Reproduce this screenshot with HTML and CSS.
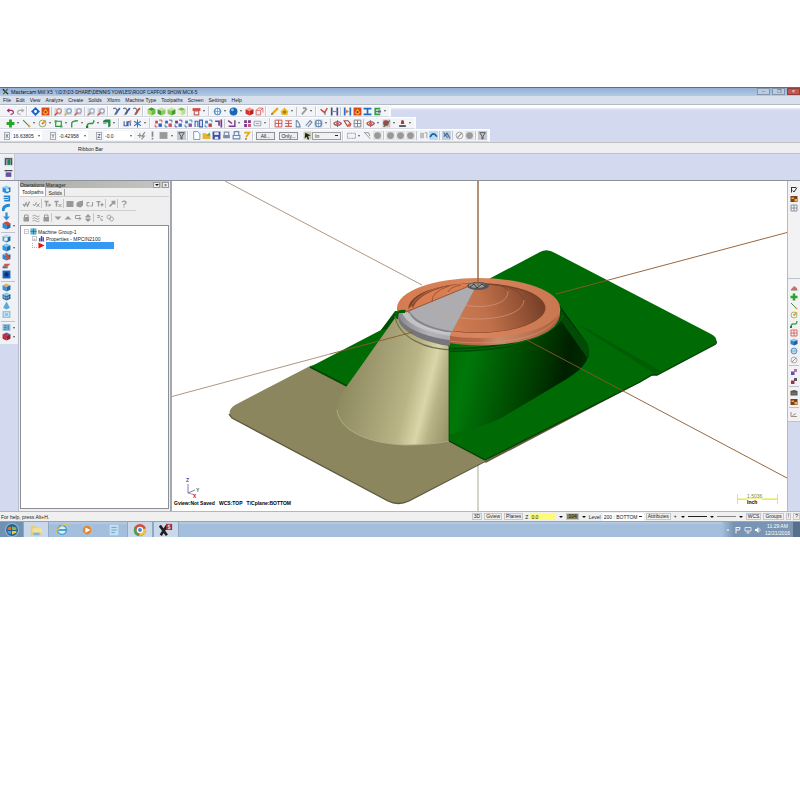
FILE: index.html
```html
<!DOCTYPE html>
<html lang="en">
<head>
<meta charset="utf-8">
<title>Mastercam Mill X5</title>
<link rel="stylesheet" href="styles.css">
</head>
<body>
<div class="app">
  <header class="titlebar">
    <span data-icon="mcx"></span>
    <span class="title">Mastercam Mill X5&nbsp; \\D3\D3-SHARE\DENNIS YOWLES\ROOF CAPFOR SHOW.MCX-5</span>
    <button class="win" aria-label="Minimize">–</button><button class="win" aria-label="Restore">❐</button><button class="win close" aria-label="Close">×</button>
  </header>
  <nav class="menubar">
    <button>File</button><button>Edit</button><button>View</button><button>Analyze</button><button>Create</button><button>Solids</button><button>Xform</button><button>Machine Type</button><button>Toolpaths</button><button>Screen</button><button>Settings</button><button>Help</button>
  </nav>
  <div class="toolbars">
    <div class="bar" data-bar="undo redo / diamond gear | magR magB magR2 | magG magR2 / penB penN penR / cubeT cubeG cubeY cubeL / calR v / globe v ball v cubeR cubeO / pencil house v | pencilG v / angle hN | hO gear iBeam eG v"></div>
    <div class="bar" data-bar="plus v line v arc v rect v fillet v spline v solid v / dim star v / xfA xfB xfC xfD xfE xfF xfG | move v gridP rectS v / gridR rowsR half clip globeB v | eyeR tagR gridK | eyeR v disc v lamp v"></div>
    <div class="bar">
      <label class="axis" for="ax">X</label><input class="num" id="ax" value="16.63805"><span class="caret"></span>
      <label class="axis" for="ay">Y</label><input class="num" id="ay" value="-0.42958"><span class="caret"></span>
      <label class="axis" for="az">Z</label><input class="num" id="az" value="-0.0"><span class="caret"></span>
      <div class="icons loose" data-bar="bolt bang block v funnel"></div>
      <div class="icons" data-bar="/ doc open save print1 print2 help /"></div>
      <button class="push">All...</button><button class="push">Only...</button>
      <div class="icons" data-bar="pick"></div>
      <select class="mode" aria-label="Selection mode"><option>In</option></select>
      <div class="icons" data-bar="/ dash v wand dot | dot dot dot | shade curve | net | no dot | funnel"></div>
    </div>
  </div>
  <div class="ribbon">Ribbon Bar</div>
  <div class="dock"><div class="docked" data-bar="green1 purple1"></div></div>
  <main class="work">
    <aside class="side" data-bar="sExt sRev sSweep sLoft sFil v - sShell sCyl v sTrim sSheet sBlock - sBox sMesh sCone sPan - sList v sBall v"></aside>
    <section class="panel">
      <div class="panelhead"><span>Operations Manager</span><button class="mini" aria-label="Panel menu"><span class="caret dark"></span></button><button class="mini" aria-label="Close panel">×</button></div>
      <div class="tabs"><button class="tab on">Toolpaths</button><button class="tab">Solids</button></div>
      <div class="ptools" data-bar="chk chkx | tT tTx | block hex g1 tG | wrench | q"></div>
      <div class="ptools second" data-bar="lock wave lock | dn up stepr ud | net2 rings"></div>
      <div class="tree">
        <div class="node"><span class="exp">−</span><span data-icon="group"></span>Machine Group-1</div>
        <div class="node lvl"><span class="exp">+</span><span data-icon="props"></span>Properties - MPCIN2100</div>
        <div class="node lvl"><span class="elbow"></span><span data-icon="arrow"></span><span class="sel"></span></div>
      </div>
    </section>
    <section class="view">
      <svg viewBox="172 181 615 330" preserveAspectRatio="xMidYMid slice" role="img" aria-label="Roof cap model">
        <defs>
          <linearGradient id="tan" gradientUnits="userSpaceOnUse" x1="345" y1="375" x2="455" y2="403">
            <stop offset="0" stop-color="#8e8a60"/><stop offset=".3" stop-color="#a39e73"/><stop offset=".58" stop-color="#bab587"/><stop offset=".74" stop-color="#dbd6aa"/><stop offset=".84" stop-color="#b8b386"/><stop offset="1" stop-color="#99946a"/>
          </linearGradient>
          <linearGradient id="grn" gradientUnits="userSpaceOnUse" x1="449" y1="360" x2="590" y2="392">
            <stop offset="0" stop-color="#006c02"/><stop offset=".13" stop-color="#00780a"/><stop offset=".35" stop-color="#005c04"/><stop offset=".62" stop-color="#003a00"/><stop offset=".8" stop-color="#002000"/><stop offset="1" stop-color="#003300"/>
          </linearGradient>
          <linearGradient id="cop" gradientUnits="userSpaceOnUse" x1="455" y1="325" x2="545" y2="295">
            <stop offset="0" stop-color="#cf7b53"/><stop offset=".35" stop-color="#c0704a"/><stop offset=".7" stop-color="#975435"/><stop offset="1" stop-color="#6e3b27"/>
          </linearGradient>
          <linearGradient id="rim" x1="0" x2="1"><stop offset="0" stop-color="#d57b50"/><stop offset=".5" stop-color="#d9855d"/><stop offset="1" stop-color="#c87750"/></linearGradient>
          <linearGradient id="edge" x1="0" x2="1"><stop offset="0" stop-color="#9a5535"/><stop offset=".5" stop-color="#b9694a"/><stop offset=".62" stop-color="#c98c6c"/><stop offset="1" stop-color="#ab5e3d"/></linearGradient>
          <linearGradient id="sil" x1="0" x2="1"><stop offset="0" stop-color="#8c8c90"/><stop offset=".2" stop-color="#b4b4b8"/><stop offset=".42" stop-color="#a2a2a6"/></linearGradient>
          <clipPath id="left"><path d="M475 288 450 335V352H380V312H407L466 287z"/></clipPath>
        </defs>
        <g fill="none" stroke="#8d6a4c" stroke-width=".7">
          <path d="M225 181 422 285M172 396.500 330 354"/><path d="M478 450V511" stroke="#8b8468"/>
        </g>
        <path d="M232 418Q226 411 235 405L310 366 400 340 485 461 409 501Q398 506 388 501z" fill="#8b865e"/>
        <path d="M229 414 232 418 388 501Q398 506 409 501L486 461" fill="none" stroke="#5b583c" stroke-width="1.300"/>
        <path d="M640 381 485 462" stroke="#655e42" stroke-width="2.500"/>
        <path d="M449 300 540 252Q547 248 555 253L711 334Q720 339 714 345L657 375 652 375 640 382 485 460 449 441z" fill="#006b04"/>
        <path d="M716 341Q717 344 714 345L657 375 652 375 640 382 485 460 449 441" fill="none" stroke="#003f02" stroke-width="1.300"/>
        <path d="M578 325 586 328 661 371 655 374z" fill="#005d04"/>
        <path d="M310 367 381 330 395 311H407L397 320 347 386z" fill="#006b04"/>
        <path d="M310 367 347 386" stroke="#004502" stroke-width="1.500"/>
        <path d="M395 313 381 330 399 327z" fill="#004c04"/>
        <path d="M395 318 347 386Q334 403 337 413C340 432 372 444 405 445Q430 445 449 441V340z" fill="url(#tan)"/>
        <path d="M337 410C340 432 372 444 405 445Q430 445 449 441" fill="none" stroke="#b4af86" stroke-width=".8"/>
        <path d="M449 340 560 306 587 343Q592 355 583 366 576 374 560 383L503 417Q485 427 449 434z" fill="url(#grn)"/>
        <path d="M558 306 587 343Q591 353 588 359L559 318z" fill="#004b05"/>
        <path d="M395 316C398 337 425 350 455 350 515 350 557 335 562 312" fill="none" stroke="#72704b" stroke-width="1.200"/>
        <path d="M449 350C515 350 557 335 562 312" fill="none" stroke="#004b06" stroke-width="4"/>
        <path d="M449 350C515 350 557 335 563 315" fill="none" stroke="#08740e" stroke-width=".8"/>
        <path d="M397 308V313C402 356 558 356 560 314V308z" fill="url(#edge)"/>
        <ellipse cx="478.500" cy="308" rx="81.500" ry="30" fill="url(#rim)"/>
        <path d="M560 308C558 350 440 350 410 329" fill="none" stroke="#df936e" stroke-width=".6"/>
        <ellipse cx="477" cy="308" rx="68.500" ry="25" fill="#7c4228"/>
        <ellipse cx="477.500" cy="308.500" rx="66.500" ry="24" fill="url(#cop)"/>
        <path d="M411 306C420 288 453 282 472 284L407 311z" fill="#da7d50"/>
        <path d="M411 306C421 290 447 284 461 284 438 287 419 294 413 308z" fill="#8e4c30"/>
        <g clip-path="url(#left)">
          <ellipse cx="478" cy="317" rx="80" ry="31" fill="#77777b"/>
          <ellipse cx="478" cy="312" rx="80" ry="30" fill="url(#sil)"/>
          <ellipse cx="478" cy="310" rx="76" ry="28" fill="#c0c0c5"/>
          <ellipse cx="478" cy="308" rx="71" ry="27" fill="#85858a"/>
          <ellipse cx="478" cy="307" rx="69" ry="26" fill="#acacb1"/>
          <path d="M409 313C414 325 430 332 451 333" fill="none" stroke="#d0d0d4" stroke-width=".8"/>
        </g>
        <g fill="none" stroke-width=".6">
          <path d="M432 302C432 324 523 326 524 300" stroke="#d1a18b"/><path d="M448 292C447 310 509 313 508 291" stroke="#cfa38f"/>
          <path d="M524 300Q521 290 502 286M508 291Q505 286 495 284M448 292Q450 287 461 285M432 302Q431 292 449 286" stroke="#71402c"/>
        </g>
        <path d="M406 312 467 287" stroke="#97573b"/>
        <path d="M397 312Q399 309 406 310L405 313 399 313 397 320z" fill="#005f03"/>
        <ellipse cx="478" cy="286" rx="11" ry="4" fill="#555557"/>
        <ellipse cx="477" cy="285.500" rx="8" ry="2.300" fill="#999b9d"/><path d="M470 287 474 284 477 288 482 284 486 287" fill="none" stroke="#38393c"/>
        <path d="M449 345V441" stroke="#004b02" stroke-width=".8"/>
        <g fill="none" stroke="#8b572c" stroke-width=".9">
          <path d="M478 181V286" stroke="#95643c" stroke-width="1.400"/><path d="M787 232.500 556 294M527 340 787 478M413 332 330 354"/>
        </g>
        <path d="M188 484V493L195 490" fill="none" stroke="#5560a8" stroke-width=".8"/><path d="M188 493 195 495" stroke="#b44" stroke-width=".6"/>
        <g class="gl"><text x="186" y="482" fill="#3344bb">Z</text><text x="196" y="492" fill="#178242">Y</text><text x="193" y="498" fill="#c22">X</text>
        <text x="174" y="505" xml:space="preserve">Gview:Not Saved   WCS:TOP   T/Cplane:BOTTOM</text></g>
        <path d="M737.500 494V504M777.500 494V504M738 499.500H747M762 499.500H777" fill="none" stroke="#e4ee42"/>
        <path d="M738 498.500H777" stroke="#eff47c" stroke-width=".8"/>
        <text class="scale" x="747" y="498">1.5036</text><text class="gl" x="747" y="504">Inch</text>
      </svg>
    </section>
    <aside class="side right">
      <div class="strip first" data-bar="pickK winO gridK"></div>
      <div class="strip" data-bar="house2 plus line arc spline gridR ballB globe no - cubeP cubeD - rain winO - inch"></div>
    </aside>
  </main>
  <footer class="status">
    <span class="help">For help, press Alt+H.</span>
    <button>3D</button><button>Gview</button><button>Planes</button>
    <label for="depth">Z</label><input class="depth" id="depth" value="0.0"><span class="caret dark"></span>
    <button class="swatch">104</button><span class="caret dark"></span>
    <label for="level">Level</label><select class="level" id="level"><option>200 : BOTTOM</option></select>
    <button>Attributes</button><button class="flat">+</button><span class="caret dark"></span>
    <span class="rule thick"></span><span class="caret dark"></span><span class="rule"></span><span class="caret dark"></span>
    <button>WCS</button><button>Groups</button><button>!</button><button>?</button>
  </footer>
  <div class="taskbar">
    <button class="task" aria-label="Start" data-icon="orb"></button>
    <button class="task open" aria-label="Explorer" data-icon="folder"></button>
    <button class="task" aria-label="Internet Explorer" data-icon="ie"></button>
    <button class="task" aria-label="Media Player" data-icon="media"></button>
    <button class="task" aria-label="Notes" data-icon="note"></button>
    <button class="task open" aria-label="Chrome" data-icon="chrome"></button>
    <button class="task open" aria-label="Mastercam" data-icon="mcBig"></button>
    <div class="tray"><span data-icon="tup"></span><span data-icon="flag"></span><span data-icon="screen"></span><span data-icon="vol"></span>
      <div class="clock">11:29 AM<br>12/21/2016</div><span class="peek"></span></div>
  </div>
</div>
<script src="script.js"></script>
</body>
</html>
```
FILE: styles.css
```css
* { box-sizing: border-box; }
body { margin: 0; background: #fff; font: 5px/6px "Liberation Sans", Arial, sans-serif; color: #222; }
button, input, select { font: inherit; color: inherit; margin: 0; padding: 0; border: 0; background: none; border-radius: 0; }
select { appearance: none; }
svg { display: block; }
.app { margin-top: 87px; display: flex; flex-direction: column; background: #d3d9ee; }

.titlebar { height: 9px; display: flex; align-items: center; gap: 1px; padding: 0 0 1px 2px; border-top: 1px solid #56718f; background: linear-gradient(#94b0d4, #b4cae6); }
.titlebar svg { width: 7px; height: 7px; }
.title { flex: 1; padding-left: 1px; color: #16202f; white-space: nowrap; font-family: Roboto, "Liberation Sans", sans-serif; }
.win { width: 13px; height: 7px; line-height: 5px; border: 1px solid #8395ad; background: #bccbe0; margin-right: 1px; color: #43566f; }
.win.close { background: #c4554d; border-color: #8f403c; color: #fff; margin-right: 0; }
.menubar { height: 9px; background: #d8e0ee; border-bottom: 1px solid #b5bac5; white-space: nowrap; display: grid; grid-template-columns: repeat(12, auto) 1fr; column-gap: 5px; align-items: center; padding-left: 3px; }

.toolbars { background: linear-gradient(#fff 0 2px, #d3d9ee 5px); display: flex; flex-direction: column; align-items: flex-start; }
.bar { height: 12px; display: flex; align-items: center; background: #f3f4f7; border-top: 1px solid #fff; border-bottom: 1px solid #d5d8df; border-right: 2px solid #fafbfc; padding: 0 1px 0 5px; }
.bar:last-child { height: 13px; padding-left: 4px; }
.icons { display: flex; align-items: center; }
.loose { gap: 1px; }
.ico { width: 10px; height: 9px; display: flex; align-items: center; justify-content: center; flex: none; }
.ico svg { width: 9px; height: 9px; }
.caret { width: 6px; height: 6px; flex: none; display: flex; align-items: center; justify-content: center; }
.caret::after { content: ""; border: 1px solid transparent; border-top: 2px solid #555; border-bottom: 0; }
.caret.dark::after { border-width: 2px 2px 0; border-top-color: #111; }
.sep { width: 1px; height: 9px; margin: 0 1px; background: #c2c5cc; flex: none; }
.grip { width: 2px; height: 10px; margin: 0 2px 0 1px; border-left: 1px solid #c9ccd4; border-right: 1px solid #fff; flex: none; }
.axis { width: 6px; height: 8px; line-height: 6px; border: 1px solid #a9acb2; text-align: center; margin-right: 2px; }
.num { width: 24px; height: 9px; background: #fff; padding-left: 1px; }
.num + .caret { background: #fff; height: 9px; margin-right: 8px; }
#az + .caret { margin-right: 2px; }
.push { width: 19px; height: 8px; border: 1px solid #8d9097; background: #eeeef0; margin-right: 4px; line-height: 6px; }
.mode { width: 29px; height: 8px; border: 1px solid #9a9da3; padding-left: 2px; background: linear-gradient(#222, #222) calc(100% - 2px) 50% / 3px 1px no-repeat #f1f1f3; }

.ribbon { height: 12px; line-height: 12px; padding-left: 78px; background: #efeff2; border-top: 1px solid #bfc0c5; border-bottom: 1px solid #bfc2cb; }
.dock { height: 26px; display: flex; }
.docked { width: 15px; height: 26px; background: #eef0f6; border-right: 1px solid #c6cad6; display: flex; flex-direction: column; align-items: center; gap: 2px; padding: 2px 0 0 3px; }
.docked .ico { height: 10px; }

.work { display: flex; height: 331px; border-top: 1px solid #8f929a; }
.side { width: 19px; display: flex; flex-wrap: wrap; align-content: flex-start; padding: 4px 2px 0 1px; background: linear-gradient(#f0f1f5 0 163px, #d3d9ee 163px); border-right: 1px solid #b9bdc9; flex: none; }
.side .ico { height: 9px; margin-right: 5px; }
.side .ico.drop { margin-right: 0; }
.side .caret { width: 5px; height: 9px; }
.side .hr { width: 14px; height: 1px; margin: 2px 0 1px; background: #c0c3cb; }
.side.right { width: 13px; border: 0; border-left: 1px solid #b5b9c3; padding: 0; background: #d3d9ee; display: block; }
.right .ico { margin: 0 1px; }
.right .hr { display: block; width: 10px; margin: 1px; }
.strip { background: #f2f2f5; padding: 4px 0 3px; border-bottom: 1px solid #c0c3cb; }
.strip.first { height: 98px; }
.right .ico svg { width: 8px; height: 8px; }

.panel { width: 153px; flex: none; display: flex; flex-direction: column; background: #efefef; border-right: 2px solid #a4a7ad; padding: 0 1px 2px; }
.panelhead { height: 7px; display: flex; align-items: center; background: linear-gradient(90deg, #a9ada8, #c4c6c2); gap: 2px; }
.panelhead span:first-child { flex: 1; }
.panelhead .mini span:first-child { flex: none; }
.mini { width: 7px; height: 6px; line-height: 4px; border: 1px solid #999; background: #eee; display: flex; justify-content: center; align-items: center; }
.tabs { display: flex; align-items: flex-end; height: 9px; border-bottom: 1px solid #d0d0d0; }
.tab { height: 7px; line-height: 6px; padding: 0 2px; border: 1px solid #aaa; border-width: 0 1px 0 0; }
.tab.on { height: 9px; background: #fff; }
.ptools { width: 116px; height: 14px; display: flex; align-items: center; padding-left: 1px; border-bottom: 1px solid #d0d0d0; }
.ptools.second { height: 13px; border: 0; }
.ptools .sep { margin: 0 1px 0 0; }
.ptools svg { width: 8px; height: 8px; }
.tree { flex: 1; margin-top: 1px; border: 1px solid #8b8f96; background: #fff; padding: 2px 0 0 3px; }
.node { height: 7px; display: flex; align-items: center; gap: 1px; white-space: nowrap; }
.node svg { width: 7px; height: 7px; }
.lvl { padding-left: 8px; }
.exp { width: 5px; height: 5px; line-height: 3px; font-size: 4px; border: 1px solid #c5c8cd; color: #555; text-align: center; }
.elbow { width: 5px; height: 5px; border-left: 1px dotted #aaa; border-bottom: 1px dotted #aaa; }
.sel { width: 68px; height: 7px; background: #3399f5; }
.view { flex: 1; min-width: 0; background: #fff; }
.view svg { width: 100%; height: 100%; }
.gl { font: bold 5px "Liberation Sans", sans-serif; }
.scale { font: 5px "Liberation Sans", sans-serif; fill: #83853b; }

.status { height: 10px; display: flex; align-items: center; gap: 2px; background: #f0f0f0; border-top: 1px solid #b3b7c0; white-space: nowrap; }
.help { flex: 1; padding-left: 1px; }
.status button { height: 7px; padding: 0 1px; border: 1px solid #c6c8cc; line-height: 5px; }
.status button.flat { border: 0; }
.status .depth { width: 26px; height: 7px; background: #fdfb78; padding-left: 1px; }
.status .swatch { background: #8b865e; }
.status .level { width: 41px; height: 8px; padding-left: 1px; background: linear-gradient(#222, #222) calc(100% - 2px) 50% / 3px 1px no-repeat #fff; }
.rule { width: 19px; height: 1px; background: #888; }
.rule.thick { background: #222; }

.taskbar { height: 16px; display: flex; background: linear-gradient(#b7cde4, #a3bedc 3px, #a4bfdc); border-top: 1px solid #8ca5c4; }
.task { width: 26px; display: flex; align-items: center; justify-content: center; }
.task svg { width: 14px; height: 14px; }
.task.open { background: #c9d9ea; border: 1px solid #8fa7c2; border-width: 0 1px; }
.task:first-child { width: 23px; background: #6f91b4; }
.tray { margin-left: auto; width: 78px; display: flex; align-items: center; gap: 2px; padding-left: 2px; color: #fff; background: linear-gradient(90deg, #a3bedc, #7893b2 12px, #7d97b5); }
.tray svg { width: 8px; height: 8px; }
.clock { flex: 1; text-align: center; line-height: 7px; }
.peek { width: 7px; height: 100%; background: #566f8b; }
```
FILE: script.js
```js
// Icon artwork on a 16 x 16 grid.
const p = (d, c, w = 2) => `<path d="${d}" fill="none" stroke="${c}" stroke-width="${w}"/>`;
const f = (d, c) => `<path d="${d}" fill="${c}"/>`;
const o = (x, y, r, c, s = 'none') => `<circle cx="${x}" cy="${y}" r="${r}" fill="${c}" stroke="${s}" stroke-width="1.5"/>`;
const cube = (a, b, c) => f('M8 1 15 4 8 7 1 4z', a) + f('M1 4 8 7V15L1 12z', b) + f('M15 4 8 7V15L15 12z', c);
const mag = (c, h) => f('M1 2H14V14H1z', '#cfd6df') + o(9, 7, 4, '#e8f3fb', c) + p('M6 10 1 15', h, 2.5);
const pen = (c) => p('M2 3Q8 0 9 7T4 13', '#777', 2) + p('M14 2 6 12', c, 3);
const grid = (c) => p('M2 2H14V14H2zM2 8H14M8 2V14', c, 1.6);
const globe = (c) => o(8, 8, 6, '#eef7fd', c) + p('M2 8H14M8 2V14M5 3Q2 8 5 13M11 3Q14 8 11 13', c, 1);
const pair = (a, b) => f('M2 3H7V8H2z', a) + f('M8 8H14V14H8z', b) + p('M9 2H14V6M2 10V14H6', a, 1.6);
const G = '#999';
const ICONS = {
  mcx: p('M2 3 14 14', '#222', 3) + p('M13 2 3 14', '#3b6b3b', 3),
  undo: p('M4 6H10Q14 7 13 11 12 13 8 13', '#9b2a73') + f('M1 6 6 2V10z', '#9b2a73'),
  redo: p('M12 6H6Q2 7 3 11 4 13 8 13', '#aaa') + f('M15 6 10 2V10z', '#aaa'),
  diamond: f('M8 0 16 8 8 16 0 8z', '#1e62c4') + o(8, 8, 2.5, '#fff'),
  gear: f('M1 1H15V15H1z', '#d8481b') + f('M3 10 8 3 13 10 8 14z', '#f6b326') + o(8, 9, 2, '#9c2b10'),
  magR: mag('#c2503b', '#d33'), magB: mag('#4a7fb8', '#e2a33a'), magR2: mag('#8b6f9c', '#d54a36'), magG: mag('#8895a6', '#c96553'),
  penB: pen('#3467bd'), penN: pen('#3b5aa0'), penR: pen('#b6443a'),
  cubeT: cube('#3e9a2c', '#a9d873', '#6dbb3c'), cubeG: cube('#c5e59a', '#3f9e33', '#8cc765'), cubeY: cube('#c5e59a', '#8fc757', '#3f9e33'), cubeL: cube('#79bb4b', '#e2f3cf', '#b9dd95'),
  calR: f('M1 2H15V7H1z', '#d64a44') + p('M4 7H12V14H4z', '#c0605b'),
  globe: globe('#3c82bd'), globeB: f('M1 1H15V15H1z', '#b8cfe6') + globe('#54759d'),
  ball: o(8, 8, 7, '#1767b5') + o(6, 5, 2.5, '#8fc8ef'), ballB: cube('#8cc8ee', '#2c84cc', '#1a60ae'),
  cubeR: cube('#f09a8d', '#d9302b', '#b82320'), cubeO: p('M2 6H10V14H2zM6 2H14V10M2 6 6 2M10 6 14 2', '#dc6660', 1.6),
  pencil: p('M14 2 4 12', '#e2aa20', 4) + f('M2 14 3 10 6 13z', '#6b4a1c'), pencilG: p('M14 3 5 13M13 2H7', '#999', 3),
  house: f('M1 8 8 1 15 8 13 14H3z', '#e6bb2d') + o(8, 9, 3, '#a5752d'), house2: f('M1 12 8 4 14 8V12z', '#d56b74') + p('M2 12H15', '#6b8d65'),
  angle: p('M1 4 8 10 13 2', '#cc4037', 2.5) + p('M9 7V14', '#70809a'),
  hN: p('M3 1V15M13 1V15', '#3d5288', 3) + p('M3 8H13', '#ce6d7b'), hO: p('M3 1V15M13 1V15', '#2b70c7', 3) + f('M4 4 11 8 4 12z', '#e07b3a'),
  iBeam: p('M1 3H15M1 13H15M8 3V13', '#256cbd', 3), eG: p('M13 3H4V13H13M4 8H12', '#2aa339', 3) + f('M9 6H14V10H9z', '#6750a3'),
  plus: p('M8 1V15M1 8H15', '#26a528', 5), line: p('M2 2 14 14', '#468e48') + o(13, 13, 2, '#e3a73b'),
  arc: o(8, 8, 6, 'none', '#82a642') + p('M8 8 14 3', '#e19a2a', 3) + o(8, 8, 1.5, '#d9573a'), rect: p('M3 4H13V13H3z', '#2e9440') + f('M1 2H5V6H1zM11 11H15V15H11z', '#41a852'),
  fillet: p('M3 15V8Q3 3 14 3', '#38984b', 2.5), spline: p('M2 14Q2 7 8 8T14 2', '#2c9c34', 2.5) + f('M0 12H4V16H0z', '#227c2c'),
  solid: f('M2 3 6 1H15V13L11 15V6H2z', '#1f8446') + f('M2 6H8V9H2z', '#84ad91'),
  dim: p('M2 4V12H7V4M9 13V5Q14 3 13 12', '#4762a9') + o(13, 4, 2, '#df7f52'), star: p('M8 1V15M2 4 14 12M14 4 2 12', '#3872ba', 1.8),
  xfA: pair('#d44651', '#2c61ba'), xfB: pair('#3864b6', '#d14b59'), xfC: pair('#633a9d', '#3d70c0'), xfD: pair('#2f83c5', '#85538d'), xfE: p('M2 14V4H7V14M10 14V2H15V14z', '#3a60b2'), xfF: pair('#348ac7', '#c4384a'), xfG: p('M2 4H9V12M13 1V15', '#7d3a90', 3),
  move: p('M2 3 9 8M14 2V13H3', '#7d388c', 2.5), gridP: f('M2 2H7V7H2zM9 2H14V7H9zM2 9H7V14H2z', '#7d3b8a') + f('M9 9H14V14H9z', '#c24871'), rectS: p('M2 4H14V12H2zM5 8H11', '#8296b9', 1.5),
  gridR: grid('#cc5147'), rowsR: p('M2 3H14M2 8H14M2 13H14M8 3V13', '#ca6057', 2), half: p('M4 2V14H11Q10 6 4 2', '#6686ad', 1.8), clip: p('M3 12 11 3 14 6 7 14', '#7087a8', 2), gridK: grid('#77808c'),
  eyeR: p('M1 8Q8 1 15 8 8 15 1 8M8 2V14', '#a25759', 2) + o(8, 8, 2.5, '#cf594d'), tagR: p('M2 3 9 3 14 9 8 13z', '#a34b4b') + o(11, 11, 3, '#d86a4f'),
  disc: f('M1 1H15V15H1z', '#c6c2ca') + o(7, 7, 5, '#a94248') + p('M3 14 14 3', '#497143'), lamp: f('M6 2H10L11 9H5z', '#9e3932') + f('M2 11H14V14H2z', '#444'),
  bolt: p('M1 8H8M5 4V12M14 2 9 9H13L8 15', '#8b8b8b'), bang: p('M8 1V10M8 12V15', '#888', 3), block: f('M1 2H15V14H1z', G), funnel: f('M0 0H16V16H0z', '#c5c8ce') + p('M3 3H13L9 9V14H7V9z', '#4c5058', 1.6),
  doc: f('M3 1H10L14 5V15H3z', '#fff') + p('M3 1H10L14 5V15H3z', '#5d8ec1', 1.5), open: f('M1 4H7L9 6H15V14H1z', '#e5b432') + f('M8 8 14 2V8z', '#58a348'), save: f('M1 1H15V15H1z', '#3b4ea5') + f('M4 2H12V7H4zM5 10H11V14H5z', '#dfe6f7'),
  print1: f('M2 7H14V13H2z', '#7590ae') + p('M4 7V2H12V7', '#808ea2'), print2: p('M4 7V1H12V7M2 8H14V14H2z', '#6688b3'), help: p('M4 3H13L8 10V11', '#dda819', 3) + o(7, 14, 1.8, '#c98519'),
  pick: f('M1 1H15V15H1z', '#c7cbb0') + f('M4 3 14 8 9 9 11 15 8 15 7 10 3 13z', '#222'), pickK: p('M2 3H12M3 3V13M5 9 8 12 14 3', '#333'), dash: '<path d="M1 4H15V13H1z" fill="none" stroke="#888" stroke-width="1.5" stroke-dasharray="2 1"/>',
  wand: p('M2 2 13 14M3 3H10L12 9', '#8c9094', 1.6), dot: f('M0 0H16V16H0z', '#e2e2e4') + o(8, 8, 6, G), shade: f('M2 3H9V13H2z', '#b9bdc4') + p('M10 3H14V13', '#a4aab2'), curve: f('M0 0H16V16H0z', '#b9dcf3') + p('M2 11Q7 0 14 10', '#155cab', 3),
  net: f('M0 0H16V16H0z', '#c0d0de') + p('M3 3 10 12M3 10 9 4 14 13', '#406a99'), no: o(8, 8, 6, 'none', G) + p('M4 12 12 4', G),
  green1: f('M0 1H16V15H0z', '#bec3ca') + p('M3 2V14M13 2V14M3 3H13', '#383d45') + f('M6 4H11V14H6z', '#198458'), purple1: p('M1 3H15', '#333') + f('M3 6H13V14H3z', '#6453a0'),
  sExt: cube('#8ed1f4', '#2594df', '#136fba') + o(10, 9, 3, '#d9f0fc'), sRev: p('M3 4H13V12H4M3 8H11', '#2284cc', 3), sSweep: p('M2 14Q2 4 14 4', '#2489d3', 5), sLoft: f('M6 1H10V8H14L8 15 2 8H6z', '#3291d5'), sFil: cube('#c44c43', '#2789d0', '#1c68ad') + f('M4 3 10 1 15 6 8 8z', '#c9473d'),
  sShell: cube('#b1dbf2', '#599dca', '#26699f') + f('M4 7H10V12H4z', '#e7f7ff'), sCyl: cube('#7ac9ef', '#279ade', '#166cb1'), sTrim: cube('#87c8ed', '#2988c9', '#1e66a6') + f('M5 3 9 2 15 13 9 13z', '#d24c44'), sSheet: f('M5 5H15L10 10H1z', '#d5564c') + f('M1 10H10V13H1z', '#3472ac'),
  sBlock: f('M1 1H15V15H1z', '#1b67b4') + o(8, 8, 4, '#092f86'), sBox: cube('#ecad60', '#3497d3', '#1b67a3'), sMesh: cube('#8dc8e8', '#246b9e', '#164f7e') + p('M4 5V13M11 6V13M1 8 8 11 15 8', '#9cd0ec', 1), sCone: f('M8 1 14 12 8 15 2 12z', '#59acd8'), sPan: f('M1 2H15V14H1z', '#83bddd') + p('M4 5H12V11H4z', '#ecf7fc', 1.5),
  sList: f('M1 2H15V14H1z', '#8db9d7') + p('M4 5H8M4 8H8M4 11H8M11 4V12', '#2c6c9d', 1.5), sBall: cube('#446db4', '#b12d43', '#8b2038') + o(6, 7, 4, '#cb2c37'),
  cubeP: f('M2 7H9V14H2z', '#6b49b4') + f('M8 2H14V8H8z', '#b574a8'), cubeD: f('M2 7H9V14H2z', '#9d3047') + f('M8 2H14V8H8z', '#55565f'), winO: f('M1 2H15V14H1z', '#7c3f22') + f('M3 5H8V8H3zM9 8H14V13H9z', '#efb53c'), rain: f('M1 4 8 2 15 4V13H1z', '#5b5840') + f('M3 7H8V11H3z', '#d84b3c') + f('M8 7H13V11H8z', '#3783bf'), inch: p('M2 4V13H14M5 11 12 7', '#8c7f79', 1.7),
  chk: p('M2 8 5 12 9 4M9 8 11 12 15 3', G, 2.5), chkx: p('M2 8 5 12 9 4M9 8 15 13M15 7 9 14', G, 2), tT: p('M1 3H9M5 3V13', G, 3) + f('M9 7 15 10 9 14z', G), tTx: p('M1 3H9M5 3V13', G, 3) + p('M9 8 15 14M15 8 9 14', G), hex: f('M5 3 14 1V11L9 15 1 13V6z', G), g1: p('M7 5H2V12H7M13 4V12H9', G), tG: p('M1 3H9M5 3V13M9 9H15M12 6V13', G, 2.5), wrench: p('M3 13 11 5M7 3H13V9', G, 3.5), q: p('M4 4Q9 0 12 4 13 7 8 9V11M8 13V15', G, 2.5),
  lock: f('M3 6H14V15H3z', G) + p('M5 6V2H12V6', G), wave: p('M1 4Q5 1 8 4T15 4M1 9Q5 6 8 9T15 9M1 14Q5 11 8 14T15 14', G, 1.7), dn: f('M1 5H15L8 12z', G), up: f('M1 11H15L8 4z', G), stepr: p('M13 3H3V9H14M10 6 14 9 10 13', G), ud: f('M8 0 14 6H2zM2 10H14L8 16z', G) + p('M3 8H13', G), net2: p('M2 3H8M2 7H7M4 2 13 14M10 5H14M9 12H14', G, 1.6), rings: o(6, 6, 4, 'none', G) + o(11, 10, 4, 'none', G),
  group: f('M1 1H15V15H1z', '#62b5d0') + p('M8 1V15M1 8H15', '#1b6784', 1.5), props: p('M4 14V7M8 14V2M12 14V5', '#3a3bb8', 3) + p('M1 14H15', '#777', 1), arrow: f('M1 1 15 8 1 15z', '#e21414'),
  orb: o(8, 8, 7.5, '#285f8d', '#8bb3d3') + f('M3 5 7 4V8H3z', '#e56a35') + f('M8 4 13 5V8H8z', '#84bb42') + f('M3 9H7V13L3 11z', '#4a9fe0') + f('M8 9H13V11L8 13z', '#f2c73a'),
  folder: f('M2 3H7L8 5H14V14H2z', '#e6cd77') + f('M4 6H15V11H4z', '#f2e29d') + f('M5 11H12V14H5z', '#7db8da'), ie: o(8, 8, 5, '#d9effb', '#399bd4') + p('M4 8H13', '#3497d0') + p('M2 13Q-1 8 10 2 17 0 14 5', '#e2c35b', 1.2),
  media: f('M2 2H13V13H2z', '#a6c5da') + o(7, 8, 5, '#e68130') + f('M5 5 11 8 5 11z', '#fff'), note: f('M3 2H13V14H3z', '#c4e0f0') + p('M5 5H11M5 8H11M5 11H9', '#5c99c5', 1),
  chrome: o(8, 8, 7, '#d94b3b') + f('M2 4 7 15Q0 14 1 7z', '#49a456') + f('M8 8 15 6Q16 14 7 15z', '#f1c634') + o(8, 8, 3, '#4685d8', '#fff'), mcBig: p('M1 3 9 14M9 3 2 14', '#202020', 3) + f('M8 1H15V8H8z', '#9b2e38') + p('M13 2.500H10.500V4.500H12.500V6.500H10', '#eee', 1),
  tup: f('M5 9H11L8 6z', '#fff'), flag: p('M4 2V15M4 3H12L11 8H4', '#fff', 1.8), screen: p('M2 3H14V10H2zM8 10V14M5 14H11', '#e8eef5', 1.7), vol: f('M2 6H5L9 2V14L5 10H2z', '#fff') + p('M11 5Q14 8 11 11', '#fff', 1.3),
};
const svg = (name) => `<svg viewBox="0 0 16 16" aria-hidden="true">${ICONS[name]}</svg>`;

// Bars: names are buttons, v a drop-down arrow, | a divider, / a new group, - a rule.
document.querySelectorAll('[data-bar]').forEach((bar) => {
  const t = bar.dataset.bar.split(' ');
  bar.innerHTML = t.map((n, i) => {
    if (n === 'v') return '<span class="caret"></span>';
    if (n === '|') return '<span class="sep"></span>';
    if (n === '/') return '<span class="grip"></span>';
    if (n === '-') return '<span class="hr"></span>';
    return `<button class="ico${t[i + 1] === 'v' ? ' drop' : ''}" aria-label="${n}">${svg(n)}</button>`;
  }).join('');
});
document.querySelectorAll('[data-icon]').forEach((el) => { el.innerHTML = svg(el.dataset.icon); });
```
